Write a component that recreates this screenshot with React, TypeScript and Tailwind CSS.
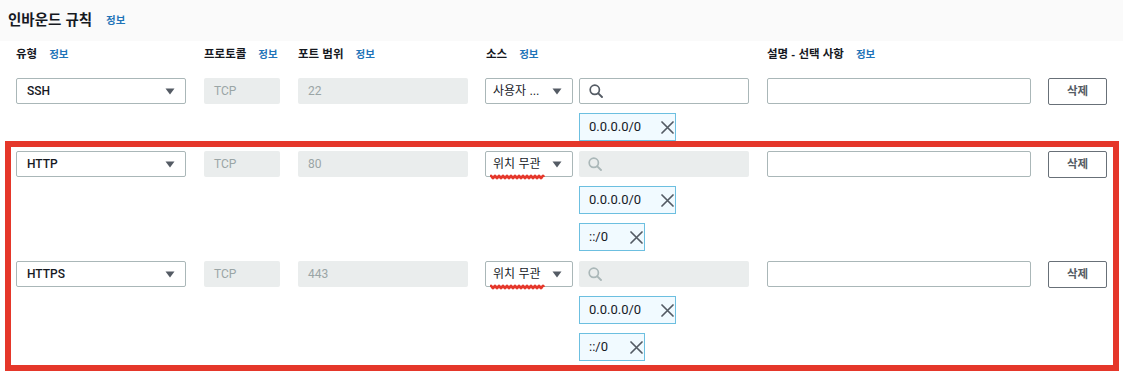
import React from "react";

const KR = { fontFamily: '"Liberation Sans", "Noto Sans CJK KR", sans-serif' };
const RB = { fontFamily: 'Roboto, "Noto Sans CJK KR", sans-serif' };

function Caret() {
  return (
    <svg width="10" height="7" viewBox="0 0 10 7" className="shrink-0">
      <path d="M0.5 0.5 L9.5 0.5 L5 6.5 Z" fill="#545b64" />
    </svg>
  );
}

function Search({ color }: { color: string }) {
  return (
    <svg width="14" height="14" viewBox="0 0 14 14" fill="none">
      <circle cx="5.8" cy="5.8" r="4.6" stroke={color} strokeWidth="1.7" />
      <path d="M9.3 9.3 L13 13" stroke={color} strokeWidth="1.9" strokeLinecap="round" />
    </svg>
  );
}

function XIcon() {
  return (
    <svg width="13" height="13" viewBox="0 0 13 13" fill="none">
      <path d="M1 1 L12 12 M12 1 L1 12" stroke="#545b64" strokeWidth="1.7" strokeLinecap="round" />
    </svg>
  );
}

function Info() {
  return <span className="text-[10.5px] font-bold text-[#1f74b8] ml-[12px]">정보</span>;
}

function Chip({ text, w }: { text: string; w: string }) {
  return (
    <div className={`${w} h-[28px] bg-[#f1faff] border border-[#6cbfe0] flex items-center justify-between pl-[9px] pr-[1px]`}>
      <span className="text-[13px] text-[#16191f]" style={RB}>{text}</span>
      <XIcon />
    </div>
  );
}

function Squiggle() {
  return (
    <svg width="56" height="6" viewBox="0 0 56 6" className="absolute left-[4px] top-[22px]">
      <path
        d="M0 3 Q1 0.5 2 3 T4 3 T6 3 T8 3 T10 3 T12 3 T14 3 T16 3 T18 3 T20 3 T22 3 T24 3 T26 3 T28 3 T30 3 T32 3 T34 3 T36 3 T38 3 T40 3 T42 3 T44 3 T46 3 T48 3 T50 3 T52 3 T54 3"
        stroke="#e5372a"
        strokeWidth="2.4"
        fill="none"
      />
    </svg>
  );
}

type Rule = { type: string; port: string; source: string; custom: boolean; chips: { t: string; w: string }[] };

const rules: Rule[] = [
  { type: "SSH", port: "22", source: "사용자 ...", custom: true, chips: [{ t: "0.0.0.0/0", w: "w-[97px]" }] },
  {
    type: "HTTP",
    port: "80",
    source: "위치 무관",
    custom: false,
    chips: [
      { t: "0.0.0.0/0", w: "w-[97px]" },
      { t: "::/0", w: "w-[66px]" },
    ],
  },
  {
    type: "HTTPS",
    port: "443",
    source: "위치 무관",
    custom: false,
    chips: [
      { t: "0.0.0.0/0", w: "w-[97px]" },
      { t: "::/0", w: "w-[66px]" },
    ],
  },
];

function RuleRow({ r }: { r: Rule }) {
  return (
    <div className="flex items-start">
      <div className="w-[170px] h-[26px] border border-[#aab7b8] rounded-[2px] bg-white flex items-center justify-between pl-[10px] pr-[10px]">
        <span className="text-[12px] font-medium text-[#16191f]" style={RB}>{r.type}</span>
        <Caret />
      </div>
      <div className="ml-[18px] w-[76px] h-[26px] bg-[#eaeded] rounded-[2px] flex items-center pl-[10px]">
        <span className="text-[12px] text-[#9aa5a6]" style={RB}>TCP</span>
      </div>
      <div className="ml-[18px] w-[170px] h-[26px] bg-[#eaeded] rounded-[2px] flex items-center pl-[10px]">
        <span className="text-[12px] text-[#9aa5a6]" style={RB}>{r.port}</span>
      </div>
      <div className="ml-[17px] relative w-[88px] h-[26px] border border-[#aab7b8] rounded-[2px] bg-white flex items-center justify-between pl-[7px] pr-[10px]">
        <span className="text-[12px] text-[#16191f]">{r.source}</span>
        <Caret />
        {!r.custom && <Squiggle />}
      </div>
      <div className="ml-[6px] w-[170px] flex flex-col gap-[9px]">
        {r.custom ? (
          <div className="h-[26px] border border-[#aab7b8] rounded-[2px] bg-white flex items-center pl-[9px]">
            <Search color="#545b64" />
          </div>
        ) : (
          <div className="h-[26px] bg-[#eaeded] rounded-[2px] flex items-center pl-[9px]">
            <Search color="#aab7b8" />
          </div>
        )}
        {r.chips.map((c, i) => (
          <Chip key={i} text={c.t} w={c.w} />
        ))}
      </div>
      <div className="ml-[18px] w-[264px] h-[26px] border border-[#aab7b8] rounded-[2px] bg-white" />
      <div className="ml-[17px] w-[59px] h-[27px] border-[1.5px] border-[#687078] rounded-[2px] bg-white flex items-center justify-center">
        <span className="text-[11.5px] font-bold text-[#545b64]">삭제</span>
      </div>
    </div>
  );
}

export default function App() {
  return (
    <div className="relative w-[1123px] h-[376px] bg-white overflow-hidden" style={KR}>
      <div className="h-[41px] bg-[#fafafa] flex items-center pl-[8px]">
        <span className="text-[14.5px] font-bold text-[#16191f]">인바운드 규칙</span>
        <span className="text-[10.5px] font-bold text-[#1f74b8] ml-[14px]">정보</span>
      </div>
      <div className="pl-[16px] mt-[6px] h-[16px] flex items-center text-[11.5px] font-bold text-[#16191f]">
        <div className="w-[170px] flex items-center">
          유형
          <Info />
        </div>
        <div className="ml-[18px] w-[94px] flex items-center">
          프로토콜
          <Info />
        </div>
        <div className="w-[187px] flex items-center">
          포트 범위
          <Info />
        </div>
        <div className="ml-[1px] w-[281px] flex items-center">
          소스
          <Info />
        </div>
        <div className="flex items-center">
          설명 - 선택 사항
          <Info />
        </div>
      </div>
      <div className="pl-[16px] mt-[15px] flex flex-col gap-[10px]">
        {rules.map((r, i) => (
          <RuleRow key={i} r={r} />
        ))}
      </div>
      <div className="absolute left-[5px] top-[141px] w-[1114px] h-[230px] border-[6px] border-[#e5372a] pointer-events-none" />
    </div>
  );
}
